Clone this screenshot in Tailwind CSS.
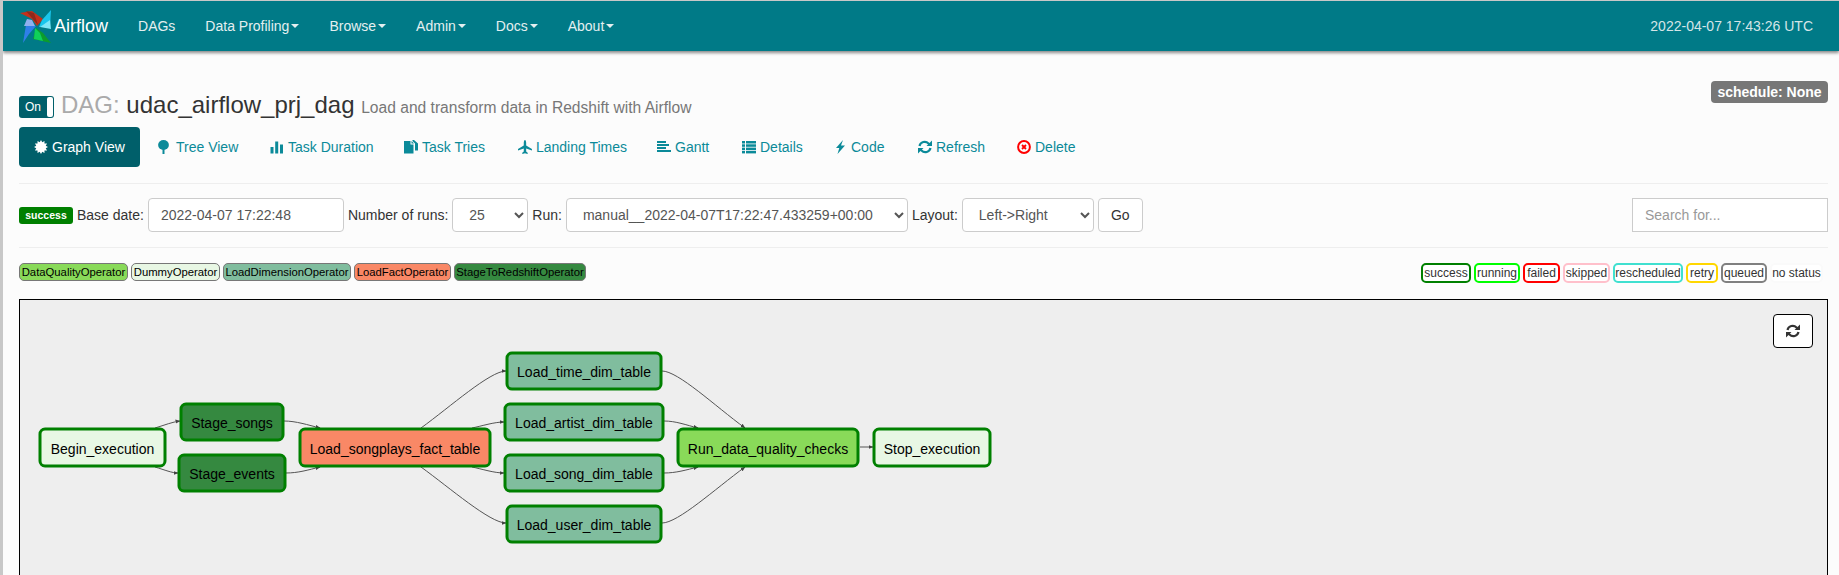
<!DOCTYPE html>
<html lang="en">
<head>
    <meta charset="UTF-8">
    <title>Airflow - DAG: udac_airflow_prj_dag</title>
    <script src="https://cdn.jsdelivr.net/npm/@tailwindcss/browser@4"></script>
</head>
<body class="h-[575px] overflow-hidden border-l-[3px] border-t border-[#c8c8c8] bg-[#fcfcfc] font-['Liberation_Sans',Arial,sans-serif] text-sm text-[#333]">

    <!-- navbar -->
    <nav class="relative z-10 flex h-[50px] items-center justify-between bg-[#007a87] pr-[26px] shadow-[0_2px_3px_rgba(0,0,0,0.45)]">
        <div class="flex items-center text-[#e4eff0]">
            <a class="flex items-center pl-[17px] pr-[15px] text-lg text-white">
                <svg class="h-[33px] w-[33px]" viewBox="0 0 33 33">
                    <polygon points="0,3 12,1 23,9 17,16 12,9" fill="#c5301a"/>
                    <polygon points="6,1 14,3 18,15 12,8" fill="#8c2a1c"/>
                    <polygon points="31,0 30,17 19,17 22,10" fill="#19c5ec"/>
                    <polygon points="30,10 31,19 20,17" fill="#7fe6f7"/>
                    <polygon points="3,33 6,15 16,16 9,24" fill="#2f7fe8"/>
                    <polygon points="4,16 15,16 12,10 7,9" fill="#8fb0ee"/>
                    <polygon points="31,33 13,29 16,18 23,23" fill="#0c9c2c"/>
                    <polygon points="14,29 15,18 20,23 23,31" fill="#0fd05a"/>
                </svg>
                <span class="ml-[1px]">Airflow</span>
            </a>
            <a class="px-[15px]">DAGs</a>
            <a class="flex items-center px-[15px]">Data Profiling<span class="ml-[2px] border-x-4 border-t-4 border-x-transparent border-t-[#e4eff0]"></span></a>
            <a class="flex items-center px-[15px]">Browse<span class="ml-[2px] border-x-4 border-t-4 border-x-transparent border-t-[#e4eff0]"></span></a>
            <a class="flex items-center px-[15px]">Admin<span class="ml-[2px] border-x-4 border-t-4 border-x-transparent border-t-[#e4eff0]"></span></a>
            <a class="flex items-center px-[15px]">Docs<span class="ml-[2px] border-x-4 border-t-4 border-x-transparent border-t-[#e4eff0]"></span></a>
            <a class="flex items-center px-[15px]">About<span class="ml-[2px] border-x-4 border-t-4 border-x-transparent border-t-[#e4eff0]"></span></a>
        </div>
        <span class="text-[#d5e5e7]">2022-04-07 17:43:26 UTC</span>
    </nav>

    <main class="ml-4 mr-[11px] pt-[30px]">
        <!-- title -->
        <div class="flex h-[46px] items-start justify-between">
            <div class="mt-[10px] flex items-center">
                <span class="mt-[1px] flex h-[22px] w-[35px] items-center justify-between rounded-[3px] bg-[#005f6a] pl-[6px] pr-[1px] text-xs text-white">On<span class="h-5 w-[6px] rounded-[2px] bg-white"></span></span>
                <h4 class="ml-[7px] text-2xl leading-[28px]"><span class="text-[#aaa]">DAG:</span> udac_airflow_prj_dag <small class="text-[15.6px] text-[#777]">Load and transform data in Redshift with Airflow</small></h4>
            </div>
            <span class="flex h-[22px] w-[117px] items-center justify-center rounded-[4px] bg-[#777] font-bold text-white">schedule: None</span>
        </div>

        <!-- tabs -->
        <ul class="flex whitespace-nowrap text-[#0b8a99]">
            <li class="mr-[3px] flex h-10 w-[121px] items-center gap-1 rounded-[4px] bg-[#005f6a] px-[15px] text-white">
                <svg class="h-[14px] w-[14px]" viewBox="0 0 14 14" fill="currentColor"><polygon points="14,7 11.73,8.27 13.06,10.5 10.46,10.46 10.5,13.06 8.27,11.73 7,14 5.73,11.73 3.5,13.06 3.54,10.46 0.94,10.5 2.27,8.27 0,7 2.27,5.73 0.94,3.5 3.54,3.54 3.5,0.94 5.73,2.27 7,0 8.27,2.27 10.5,0.94 10.46,3.54 13.06,3.5 11.73,5.73"/></svg>
                Graph View
            </li>
            <li class="flex h-10 w-[112px] items-center gap-1 px-[15px]">
                <svg class="h-[14px] w-[14px]" viewBox="0 0 14 14" fill="currentColor"><ellipse cx="5.5" cy="5" rx="5.4" ry="5"/><rect x="4.500" y="8" width="2" height="6"/></svg>
                Tree View
            </li>
            <li class="flex h-10 w-[134px] items-center gap-1 px-[15px]">
                <svg class="h-[14px] w-[14px]" viewBox="0 0 14 14" fill="currentColor"><rect x="0.5" y="7" width="3" height="6.5"/><rect x="5.2" y="1.5" width="3" height="12"/><rect x="10" y="4.5" width="3" height="9"/></svg>
                Task Duration
            </li>
            <li class="flex h-10 w-[114px] items-center gap-1 px-[15px]">
                <svg class="h-[14px] w-[14px]" viewBox="0 0 14 14" fill="currentColor"><path d="M0 1h6.500v3.500h3v9H0zM7.500 1l2.500 2.500H7.500zM8.500 0H10l4 3.500v7h-3V3.500l-2.500-2.500z"/></svg>
                Task Tries
            </li>
            <li class="flex h-10 w-[139px] items-center gap-1 px-[15px]">
                <svg class="h-[14px] w-[14px]" viewBox="0 0 14 14" fill="currentColor"><path d="M7 0c.8 0 1.200 1.500 1.200 3v2.500L14 9v1.500L8.200 8.500v3l1.500 1.200V14L7 13.200 4.300 14v-1.300l1.500-1.200v-3L0 10.500V9l5.800-3.500V3C5.800 1.500 6.200 0 7 0z"/></svg>
                Landing Times
            </li>
            <li class="flex h-10 w-[85px] items-center gap-1 px-[15px]">
                <svg class="h-[14px] w-[14px]" viewBox="0 0 14 14" fill="currentColor"><rect x="0" y="1" width="9" height="2"/><rect x="0" y="4" width="12" height="2"/><rect x="0" y="7" width="9" height="2"/><rect x="0" y="10" width="14" height="2"/></svg>
                Gantt
            </li>
            <li class="flex h-10 w-[91px] items-center gap-1 px-[15px]">
                <svg class="h-[14px] w-[14px]" viewBox="0 0 14 14" fill="currentColor"><rect x="0" y="1" width="3" height="2.500"/><rect x="4" y="1" width="10" height="2.500"/><rect x="0" y="4.300" width="3" height="2.500"/><rect x="4" y="4.300" width="10" height="2.500"/><rect x="0" y="7.600" width="3" height="2.500"/><rect x="4" y="7.600" width="10" height="2.500"/><rect x="0" y="10.900" width="3" height="2.500"/><rect x="4" y="10.900" width="10" height="2.500"/></svg>
                Details
            </li>
            <li class="flex h-10 w-[85px] items-center gap-1 px-[15px]">
                <svg class="h-[14px] w-[14px]" viewBox="0 0 14 14" fill="currentColor"><polygon points="10,0 3,8 6.300,8 4.500,14 12,5.500 8,5.500"/></svg>
                Code
            </li>
            <li class="flex h-10 w-[99px] items-center gap-1 px-[15px]">
                <svg class="h-[14px] w-[14px]" viewBox="0 0 14 14" fill="none" stroke="currentColor" stroke-width="2.200"><path d="M1.500 6a5.300 5.300 0 0 1 9-2.500L12 5M12.500 8a5.300 5.300 0 0 1-9 2.500L2 9"/><polygon points="14,0.500 14,6 8.500,6" fill="currentColor" stroke="none"/><polygon points="0,13.500 0,8 5.500,8" fill="currentColor" stroke="none"/></svg>
                Refresh
            </li>
            <li class="flex h-10 w-[90px] items-center gap-1 px-[15px]">
                <svg class="h-[14px] w-[14px]" viewBox="0 0 14 14"><circle cx="7" cy="7" r="5.900" fill="none" stroke="#f00" stroke-width="2"/><path d="M5 5l4 4M9 5l-4 4" stroke="#f00" stroke-width="1.800"/></svg>
                Delete
            </li>
        </ul>

        <hr class="mt-4 border-[#eee]">

        <!-- filter form -->
        <form class="mt-[14px] flex h-[34px] items-center justify-between">
            <div class="flex items-center gap-1">
                <span class="flex h-[17px] w-[54px] items-center justify-center rounded-[3px] bg-[#008000] text-[10.5px] font-bold text-white">success</span>
                <label>Base date:</label>
                <input class="h-[34px] w-[196px] rounded-[4px] border border-[#ccc] bg-white px-3 text-[#555]" value="2022-04-07 17:22:48">
                <label>Number of runs:</label>
                <select class="h-[34px] w-[76px] rounded-[4px] border border-[#ccc] bg-white px-3 text-[#555]"><option>25</option></select>
                <label>Run:</label>
                <select class="h-[34px] w-[342px] rounded-[4px] border border-[#ccc] bg-white px-3 text-[#555]"><option>manual__2022-04-07T17:22:47.433259+00:00</option></select>
                <label>Layout:</label>
                <select class="h-[34px] w-[132px] rounded-[4px] border border-[#ccc] bg-white px-3 text-[#555]"><option>Left-&gt;Right</option></select>
                <button type="button" class="h-[34px] w-[45px] rounded-[4px] border border-[#ccc] bg-white text-[#333]">Go</button>
            </div>
            <input class="h-[34px] w-[196px] border border-[#ccc] bg-white px-3 text-[#555] placeholder:text-[#999]" placeholder="Search for...">
        </form>

        <hr class="mt-[15px] border-[#eee]">

        <!-- legends -->
        <div class="mt-[15px] flex h-[20px] items-start justify-between">
            <div class="flex gap-[3px] text-[11.3px] text-black">
                <span class="flex h-[18px] w-[109px] items-center justify-center rounded-[5px] border border-[#777] bg-[#89da59]">DataQualityOperator</span>
                <span class="flex h-[18px] w-[89px] items-center justify-center rounded-[5px] border border-[#777] bg-[#e8f7e4]">DummyOperator</span>
                <span class="flex h-[18px] w-[128px] items-center justify-center rounded-[5px] border border-[#777] bg-[#80bd9e]">LoadDimensionOperator</span>
                <span class="flex h-[18px] w-[97px] items-center justify-center rounded-[5px] border border-[#777] bg-[#f98866]">LoadFactOperator</span>
                <span class="flex h-[18px] w-[132px] items-center justify-center rounded-[5px] border border-[#777] bg-[#358940]">StageToRedshiftOperator</span>
            </div>
            <div class="mr-[5px] flex gap-[3px] text-xs">
                <span class="flex h-[20px] w-[50px] items-center justify-center rounded-[5px] border-2 border-[#008000] bg-white">success</span>
                <span class="flex h-[20px] w-[46px] items-center justify-center rounded-[5px] border-2 border-[#00ff00] bg-white">running</span>
                <span class="flex h-[20px] w-[37px] items-center justify-center rounded-[5px] border-2 border-[#ff0000] bg-white">failed</span>
                <span class="flex h-[20px] w-[47px] items-center justify-center rounded-[5px] border-2 border-[#ffc0cb] bg-white">skipped</span>
                <span class="flex h-[20px] w-[70px] items-center justify-center rounded-[5px] border-2 border-[#40e0d0] bg-white">rescheduled</span>
                <span class="flex h-[20px] w-[32px] items-center justify-center rounded-[5px] border-2 border-[#ffd700] bg-white">retry</span>
                <span class="flex h-[20px] w-[46px] items-center justify-center rounded-[5px] border-2 border-[#808080] bg-white">queued</span>
                <span class="flex h-[20px] w-[53px] items-center justify-center rounded-[5px] border-2 border-[#fafafa] bg-white">no status</span>
            </div>
        </div>

        <!-- graph -->
        <div class="relative mt-4 h-[300px] border border-black bg-[#eee]">
            <button type="button" class="absolute right-[14px] top-[14px] flex h-[34px] w-10 items-center justify-center rounded-[4px] border border-black bg-white">
                <svg class="h-[14px] w-[14px] text-[#333]" viewBox="0 0 14 14" fill="none" stroke="currentColor" stroke-width="2.200"><path d="M1.500 6a5.300 5.300 0 0 1 9-2.500L12 5M12.500 8a5.300 5.300 0 0 1-9 2.500L2 9"/><polygon points="14,0.500 14,6 8.500,6" fill="currentColor" stroke="none"/><polygon points="0,13.500 0,8 5.500,8" fill="currentColor" stroke="none"/></svg>
            </button>
            <svg class="block" width="1000" height="275" viewBox="20 300 1000 275" font-size="14">
                <defs>
                    <marker id="arrow" viewBox="0 0 10 10" refX="9" refY="5" markerWidth="5" markerHeight="5" orient="auto"><path d="M0 1L10 5L0 9z" fill="#444"/></marker>
                </defs>
                <g fill="none" stroke="#555" stroke-width="1">
                    <path d="M155 428C165 425 172 422 180 421" marker-end="url(#arrow)"/>
                    <path d="M155 467C165 470 172 473 178 473" marker-end="url(#arrow)"/>
                    <path d="M284 421C296 421 308 425 320 428" marker-end="url(#arrow)"/>
                    <path d="M286 473C298 473 308 470 320 467" marker-end="url(#arrow)"/>
                    <path d="M421 428C450 407 490 371 506 371" marker-end="url(#arrow)"/>
                    <path d="M472 428C482 426 494 422 504 422" marker-end="url(#arrow)"/>
                    <path d="M472 467C482 469 494 473 504 473" marker-end="url(#arrow)"/>
                    <path d="M421 467C450 488 490 523 506 523" marker-end="url(#arrow)"/>
                    <path d="M662 371C678 371 715 406 745 428" marker-end="url(#arrow)"/>
                    <path d="M664 421C676 421 686 425 698 428" marker-end="url(#arrow)"/>
                    <path d="M664 473C676 473 686 470 698 467" marker-end="url(#arrow)"/>
                    <path d="M662 523C678 523 715 489 745 467" marker-end="url(#arrow)"/>
                    <path d="M860 447L873 447" marker-end="url(#arrow)"/>
                </g>
                <g stroke="#008000" stroke-width="3">
                    <rect x="40" y="429" width="125" height="37" rx="5" fill="#e8f7e4"/>
                    <rect x="181" y="404" width="102" height="36" rx="5" fill="#358940"/>
                    <rect x="179" y="455" width="106" height="36" rx="5" fill="#358940"/>
                    <rect x="300" y="429" width="190" height="37" rx="5" fill="#f98866"/>
                    <rect x="507" y="353" width="154" height="36" rx="5" fill="#80bd9e"/>
                    <rect x="505" y="404" width="158" height="36" rx="5" fill="#80bd9e"/>
                    <rect x="505" y="455" width="158" height="36" rx="5" fill="#80bd9e"/>
                    <rect x="507" y="506" width="154" height="36" rx="5" fill="#80bd9e"/>
                    <rect x="678" y="429" width="180" height="37" rx="5" fill="#89da59"/>
                    <rect x="874" y="429" width="116" height="37" rx="5" fill="#e8f7e4"/>
                </g>
                <g fill="#000" text-anchor="middle">
                    <text x="102.500" y="454">Begin_execution</text>
                    <text x="232" y="428">Stage_songs</text>
                    <text x="232" y="479">Stage_events</text>
                    <text x="395" y="454">Load_songplays_fact_table</text>
                    <text x="584" y="377">Load_time_dim_table</text>
                    <text x="584" y="428">Load_artist_dim_table</text>
                    <text x="584" y="479">Load_song_dim_table</text>
                    <text x="584" y="530">Load_user_dim_table</text>
                    <text x="768" y="454">Run_data_quality_checks</text>
                    <text x="932" y="454">Stop_execution</text>
                </g>
            </svg>
        </div>
    </main>

</body>
</html>
